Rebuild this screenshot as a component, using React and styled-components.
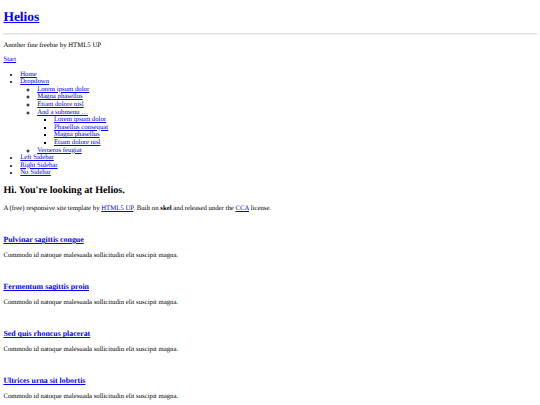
import styled, { createGlobalStyle } from "styled-components";

const menu = [
  { label: "Home" },
  {
    label: "Dropdown",
    children: [
      { label: "Lorem ipsum dolor" },
      { label: "Magna phasellus" },
      { label: "Etiam dolore nisl" },
      {
        label: "And a submenu …",
        children: [
          { label: "Lorem ipsum dolor" },
          { label: "Phasellus consequat" },
          { label: "Magna phasellus" },
          { label: "Etiam dolore nisl" },
        ],
      },
      { label: "Veroeros feugiat" },
    ],
  },
  { label: "Left Sidebar" },
  { label: "Right Sidebar" },
  { label: "No Sidebar" },
];

const features = [
  "Pulvinar sagittis congue",
  "Fermentum sagittis proin",
  "Sed quis rhoncus placerat",
  "Ultrices urna sit lobortis",
];

function MenuList({ items, nested }) {
  return (
    <Menu $nested={nested}>
      {items.map((item, i) => (
        <li key={i}>
          <a href="#">{item.label}</a>
          {item.children && <MenuList items={item.children} nested />}
        </li>
      ))}
    </Menu>
  );
}

export default function App() {
  return (
    <>
      <GlobalStyle />
      <SiteHeader>
        <Logo>
          <a href="#">Helios</a>
        </Logo>
        <Rule />
        <Tagline>Another fine freebie by HTML5 UP</Tagline>
        <footer>
          <a href="#">Start</a>
        </footer>
        <nav>
          <MenuList items={menu} />
        </nav>
      </SiteHeader>

      <Banner>
        <BannerTitle>
          Hi. You're looking at <strong>Helios</strong>.
        </BannerTitle>
        <Text>
          A (free) responsive site template by <a href="#">HTML5 UP</a>. Built
          on <strong>skel</strong> and released under the <a href="#">CCA</a>{" "}
          license.
        </Text>
      </Banner>

      <section>
        {features.map((title) => (
          <Feature key={title}>
            <ImageSlot href="#" />
            <ArticleTitle>
              <a href="#">{title}</a>
            </ArticleTitle>
            <Text>Commodo id natoque malesuada sollicitudin elit suscipit magna.</Text>
          </Feature>
        ))}
      </section>
    </>
  );
}

const GlobalStyle = createGlobalStyle`
  body {
    margin: 0 3.375px 3.375px;
    font-family: "Liberation Serif", "Times New Roman", serif;
    font-size: 6.75px;
    line-height: 1.125;
    color: #000;
    background: #fff;
    text-rendering: geometricPrecision;
  }

  a {
    color: #0000ee;
  }
`;

const SiteHeader = styled.header``;

const Logo = styled.h1`
  font-size: 2em;
  margin: 0.67em 0;
`;

const Rule = styled.hr`
  margin: 0.5em 0;
  height: 0;
  border: 0;
  border-top: 1px solid #e2e2e2;
  border-bottom: 1px solid #ededed;
`;

const Tagline = styled.p`
  margin: 1em 0;
`;

const Menu = styled.ul`
  margin: ${(p) => (p.$nested ? "0" : "1em 0")};
  padding-left: 16.875px;
`;

const Banner = styled.section``;

const BannerTitle = styled.h2`
  font-size: 1.5em;
  margin: 0.83em 0;
`;

const Text = styled.p`
  margin: 1em 0;
`;

const Feature = styled.article`
  line-height: 1.15;
`;

const ImageSlot = styled.a`
  display: block;
  height: 1.15em;
`;

const ArticleTitle = styled.h3`
  font-size: 1.17em;
  margin: 1em 0;
`;
